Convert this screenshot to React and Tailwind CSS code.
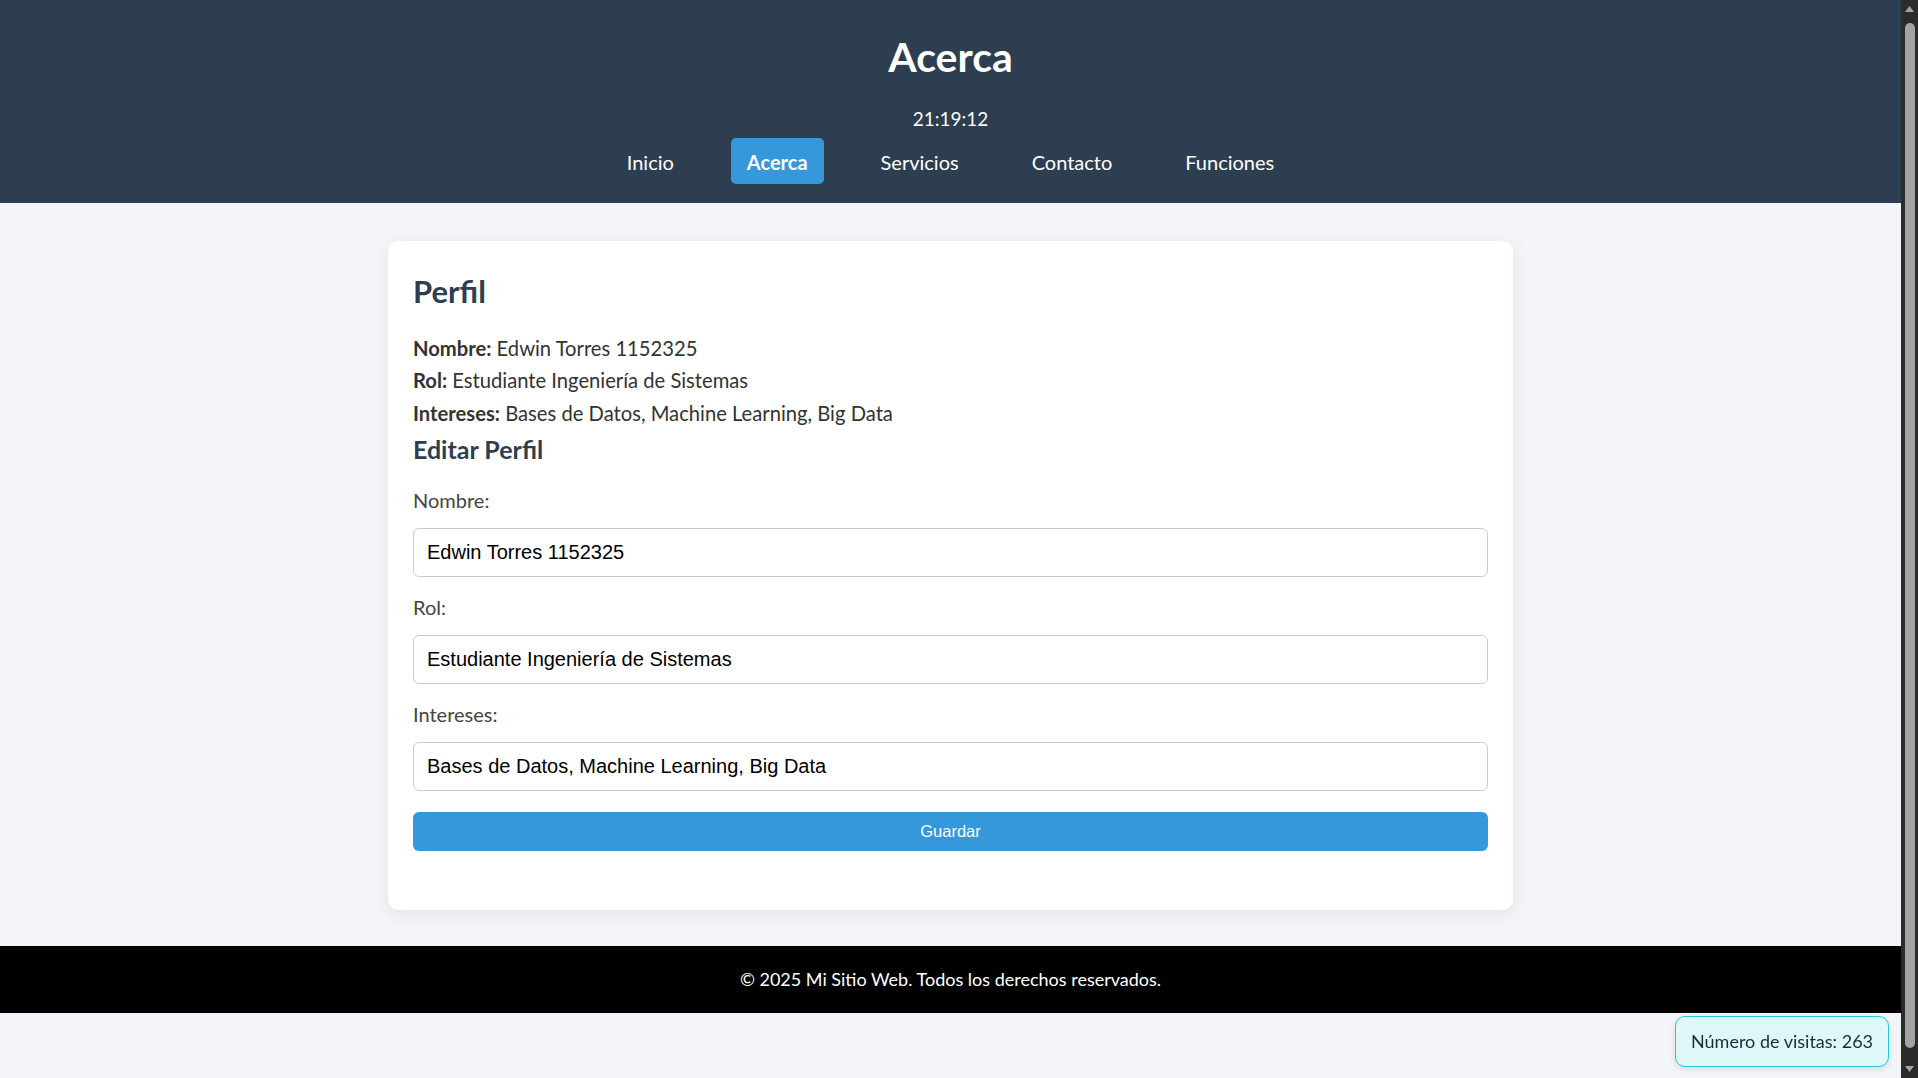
import React from "react";

const ui = "font-['Segoe_UI','Lato','Noto_Sans',sans-serif]";
const arial = "font-['Liberation_Sans',Arial,sans-serif]";

function Field({ label, value, first }) {
  return (
    <>
      <label className={`${first ? "" : "mt-[15px]"} text-[20px] leading-[30px] text-[#444]`}>{label}</label>
      <input
        readOnly
        value={value}
        className={`${arial} mt-[13px] h-[49px] border border-[#ccc] rounded-[6px] px-[13px] text-[20px] text-black bg-white outline-none`}
      />
    </>
  );
}

export default function App() {
  const nav = ["Inicio", "Acerca", "Servicios", "Contacto", "Funciones"];
  return (
    <div className={`${ui} min-h-[1098px] bg-[#f4f5f9] flex flex-col pr-[17px]`}>
      <header className="bg-[#2c3e50] text-white flex flex-col items-center pt-[33px] pb-[19px]">
        <h1 className="text-[41px] leading-[48px] font-bold">Acerca</h1>
        <div className="mt-[23px] text-[19px] leading-[30px]">21:19:12</div>
        <nav className="mt-[4px] flex gap-[41px]">
          {nav.map((n) =>
            n === "Acerca" ? (
              <a key={n} className="px-4 pt-[9px] pb-[7px] text-[20px] leading-[30px] font-bold bg-[#3498db] rounded-[5px]">
                {n}
              </a>
            ) : (
              <a key={n} className="px-4 pt-[9px] pb-[7px] text-[20px] leading-[30px] text-white">
                {n}
              </a>
            )
          )}
        </nav>
      </header>

      <main className="pt-[38px] pb-[36px]">
        <div className="w-[1125px] mx-auto bg-white rounded-[10px] shadow-[0_4px_18px_rgba(0,0,0,0.08)] px-[25px] pt-[30px] pb-[59px]">
          <h2 className="text-[31px] leading-[40px] font-bold text-[#2c3e50]">Perfil</h2>
          <div className="mt-[21px] text-[20.2px] leading-[32.4px] text-[#333]">
            <p>
              <strong className="font-bold">Nombre:</strong> Edwin Torres 1152325
            </p>
            <p>
              <strong className="font-bold">Rol:</strong> Estudiante Ingeniería de Sistemas
            </p>
            <p>
              <strong className="font-bold">Intereses:</strong> Bases de Datos, Machine Learning, Big Data
            </p>
          </div>
          <h3 className="mt-[2px] text-[25px] leading-[36px] font-bold text-[#2c3e50]">Editar Perfil</h3>
          <form className="mt-[18px] flex flex-col">
            <Field first label="Nombre:" value="Edwin Torres 1152325" />
            <Field label="Rol:" value="Estudiante Ingeniería de Sistemas" />
            <Field label="Intereses:" value="Bases de Datos, Machine Learning, Big Data" />
            <button
              type="button"
              className={`${arial} mt-[21px] h-[39px] bg-[#3498db] text-white rounded-[6px] text-[16.5px]`}
            >
              Guardar
            </button>
          </form>
        </div>
      </main>

      <footer className="bg-black text-white h-[67px] flex items-center justify-center text-[18px]">
        © 2025 Mi Sitio Web. Todos los derechos reservados.
      </footer>

      <div className="fixed right-[29px] bottom-[11px] w-[214px] h-[51px] flex items-center justify-center bg-[#e0f7fa] border border-[#26c6da] rounded-[10px] shadow-[0_2px_6px_rgba(0,0,0,0.12)] text-[18px] text-[#1e2a38]">
        Número de visitas: 263
      </div>

      <div className="fixed right-0 top-0 w-[17px] h-screen bg-[#2b2b2b] flex flex-col items-center">
        <svg width="17" height="17" viewBox="0 0 17 17" className="shrink-0">
          <path d="M4 12 L8.5 6 L13 12 Z" fill="#a3a3a3" />
        </svg>
        <div className="mt-[6px] mb-[13px] w-[10px] flex-1 rounded-full bg-[#a3a3a3]" />
        <svg width="17" height="17" viewBox="0 0 17 17" className="shrink-0">
          <path d="M4 5 L8.5 11 L13 5 Z" fill="#a3a3a3" />
        </svg>
      </div>
    </div>
  );
}
